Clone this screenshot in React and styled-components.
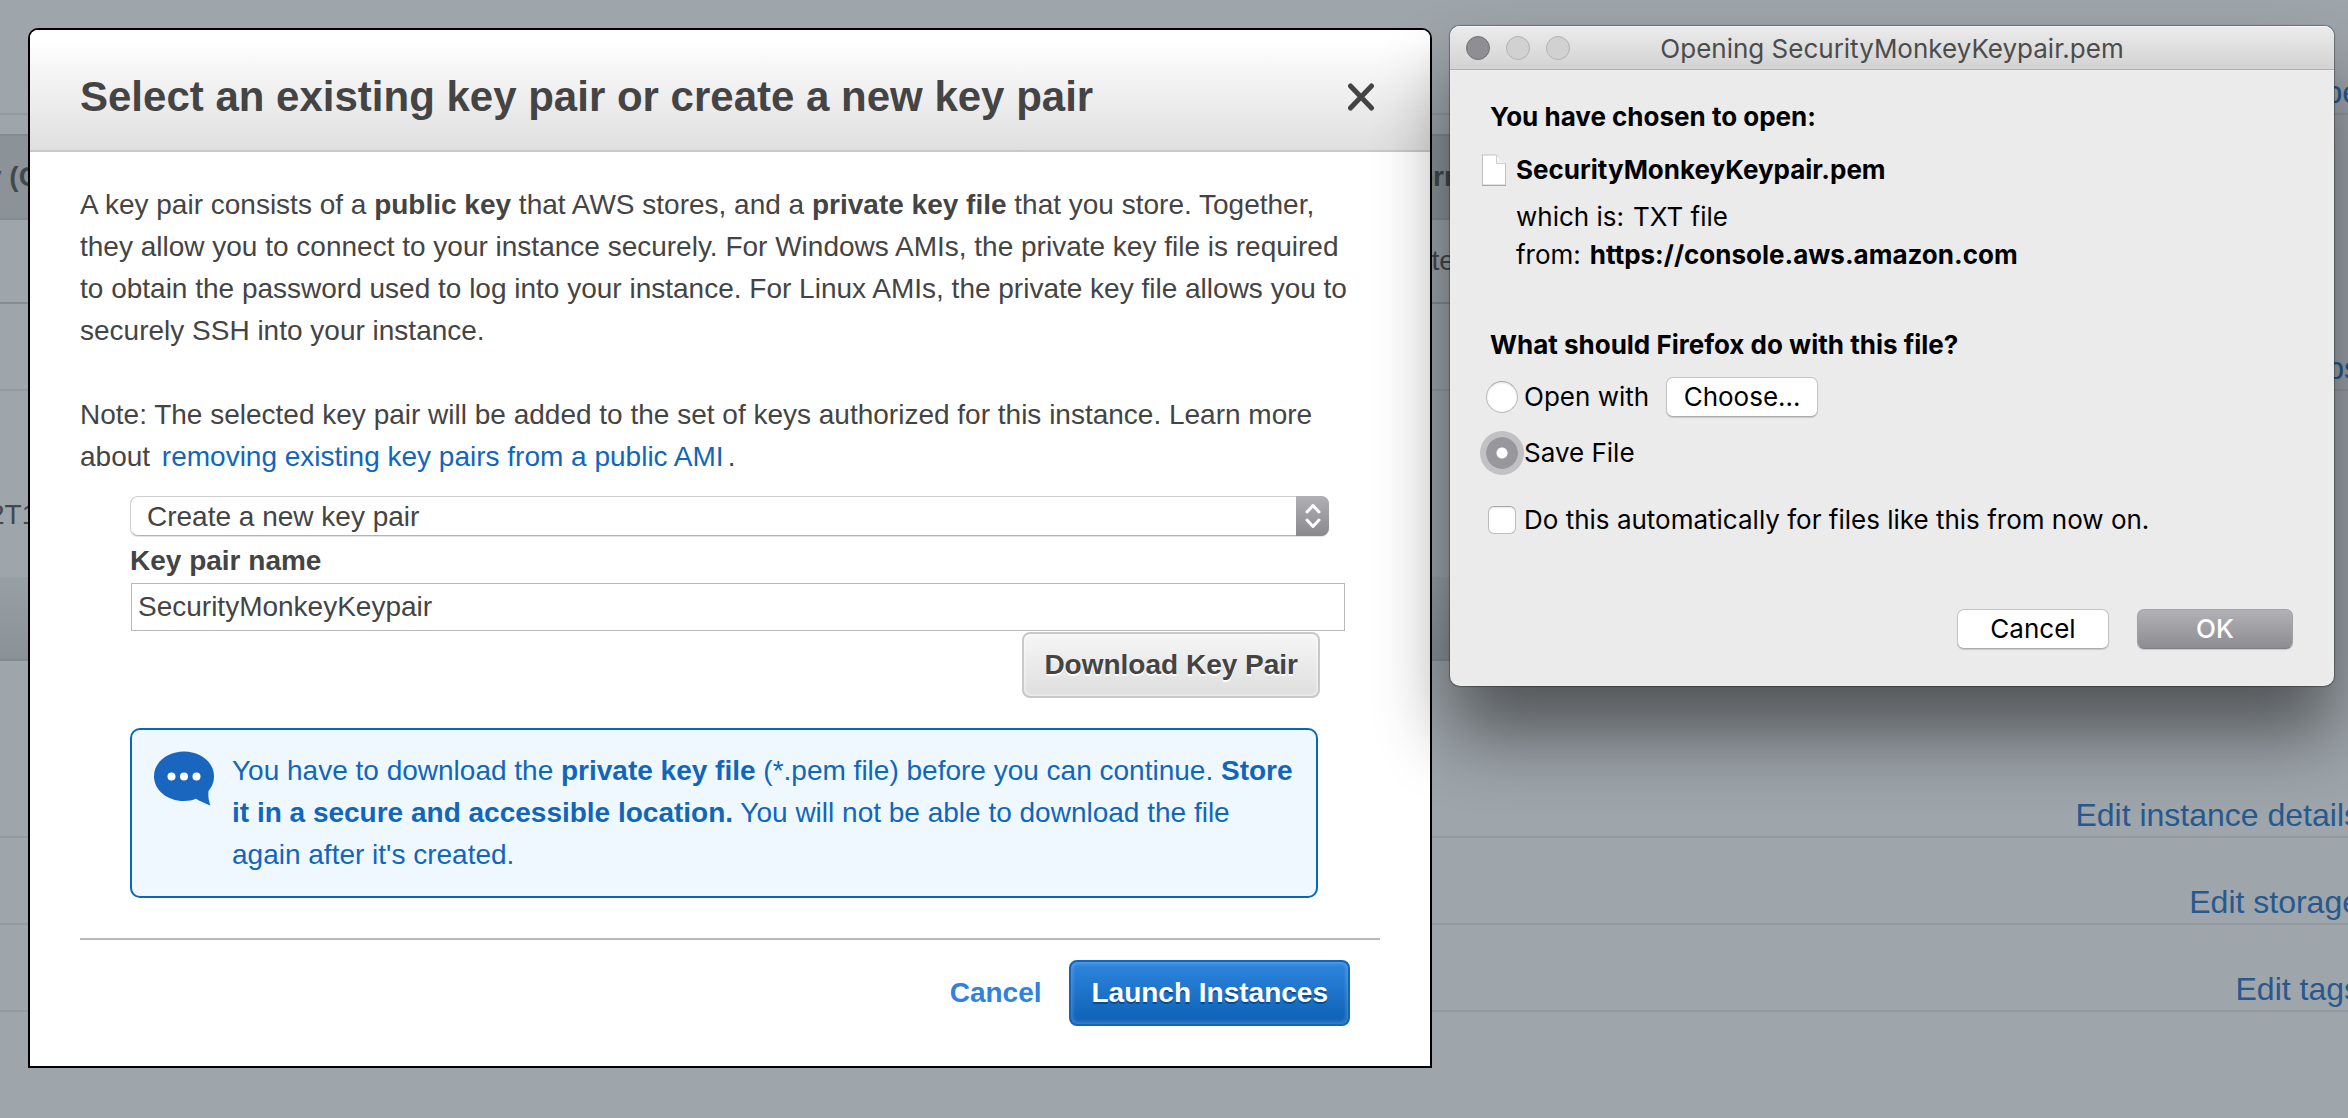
import React from 'react';
import styled, { createGlobalStyle, css } from 'styled-components';

const helvetica = '"Liberation Sans", Arial, sans-serif';
const system = 'Inter, Roboto, sans-serif';

const GlobalStyle = createGlobalStyle`
  * { box-sizing: border-box; }
  body { margin: 0; background: #9ea5ab; }
  h1, h2, p, dl, dd, hr { margin: 0; }
  button, input, select { margin: 0; font: inherit; }
`;

/* ---------- dimmed review page ---------- */

const Screen = styled.div`
  position: relative;
  min-height: 100vh;
  overflow: hidden;
  background: #9ea5ab;
  color: #42494e;
  font: 28px/32px ${helvetica};
`;

const Review = styled.main`
  margin-right: -12px;
`;

const SectionRow = styled.div`
  display: flex;
  align-items: flex-end;
  justify-content: flex-end;
  height: ${(p) => p.$height}px;
  padding-bottom: 3px;
  border-bottom: 2px solid #939a9f;
`;

const EditLink = styled.a`
  color: #27598e;
  font-size: 32px;
  line-height: 36px;
  text-decoration: none;
`;

const TypeTable = styled.table`
  width: calc(100% - 50px);
  margin-top: 19px;
  border-collapse: separate;
  border-spacing: 0;
  table-layout: fixed;

  th, td {
    height: 86px;
    padding: 0;
    overflow: hidden;
    text-align: left;
    white-space: nowrap;
    border-bottom: 2px solid #858c92;
  }
  th {
    background: #8c9398;
    border-top: 2px solid #848b90;
  }
  th:first-child { text-indent: -14px; }
  td { height: 84px; }
`;

const LeadCell = styled.col`
  width: 1416px;
`;

const IdRow = styled.div`
  display: flex;
  align-items: center;
  height: 186px;
  padding-top: 62px;
  text-indent: -11px;
`;

const Band = styled.div`
  height: 84px;
  margin-right: 50px;
  background: linear-gradient(#989fa5, #8a9197);
  border-bottom: 2px solid #848b90;
`;

/* ---------- windows above the page ---------- */

const Windows = styled.div`
  position: absolute;
  inset: 0;
  display: grid;
  grid-template-columns: minmax(0, 1fr) 884px;
  align-items: start;
  gap: 18px;
  padding: 26px 14px 0 28px;
`;

const Modal = styled.section`
  margin-top: 2px;
  overflow: hidden;
  background: #fff;
  border: 2px solid #000;
  border-radius: 10px 10px 0 0;
  color: #444;
  font: 28px/42px ${helvetica};
`;

const ModalHeader = styled.header`
  display: flex;
  align-items: center;
  justify-content: space-between;
  padding: 43px 56px 29px 50px;
  background: linear-gradient(#fff 8%, #dfdfdf);
  border-bottom: 2px solid #c8c8c8;
`;

const ModalTitle = styled.h1`
  font-size: 42px;
  line-height: 48px;
`;

const CloseButton = styled.button`
  display: flex;
  padding: 0;
  border: 0;
  background: none;
  color: #444;
`;

const ModalBody = styled.div`
  padding: 32px 50px 0;
`;

const Paragraph = styled.p`
  padding-right: 24px;
  & + & { margin-top: 42px; }
`;

const InlineLink = styled.a`
  padding: 0 4px;
  color: #1166bb;
  text-decoration: none;
`;

const Form = styled.form`
  display: flex;
  flex-direction: column;
  padding: 18px 35px 0 50px;
`;

const SelectBox = styled.div`
  position: relative;
  margin-right: 16px;
`;

const Select = styled.select`
  display: block;
  appearance: none;
  width: 100%;
  height: 40px;
  padding: 2px 50px 0 16px;
  border: 1px solid #cfcfcf;
  border-bottom-color: #b4b4b4;
  border-radius: 8px;
  background: #fff;
  color: #444;
  line-height: 36px;
  box-shadow: 0 1px 1px rgba(0, 0, 0, 0.12);
`;

const Stepper = styled.span`
  position: absolute;
  top: 0;
  right: 0;
  bottom: 0;
  display: flex;
  align-items: center;
  justify-content: center;
  width: 33px;
  border-radius: 0 8px 8px 0;
  background: linear-gradient(#b1b0b5, #89888d);
  pointer-events: none;
`;

const FieldLabel = styled.label`
  margin: 4px 0 1px;
  font-weight: bold;
`;

const TextField = styled.input`
  height: 48px;
  margin-left: 1px;
  padding: 0 6px;
  border: 1px solid #b8b8b8;
  border-radius: 0;
  background: #fff;
  color: #444;
  outline: none;
`;

const buttonTones = {
  grey: css`
    border-color: #c8c8c8;
    background: linear-gradient(#f6f6f6, #dedede);
    box-shadow: inset 0 0 3px 1px rgba(255, 255, 255, 0.6);
    color: #444;
    text-shadow: 0 2px 0 #fff;
  `,
  blue: css`
    border-color: #1166bb;
    background: linear-gradient(#2f86de, #1166bb 85%);
    box-shadow: inset 0 0 4px 1px rgba(255, 255, 255, 0.25);
    color: #fff;
    text-shadow: 0 2px 0 #0b4a8c;
  `,
};

const AwsButton = styled.button`
  height: 66px;
  padding: 0 20px;
  border: 2px solid;
  border-radius: 8px;
  font-weight: bold;
  ${(p) => buttonTones[p.$tone]}
`;

const DownloadRow = styled.div`
  display: flex;
  justify-content: flex-end;
  padding: 1px 25px 0 0;
`;

const Alert = styled.div`
  display: flex;
  align-items: flex-start;
  gap: 17px;
  margin: 30px 27px 0 0;
  padding: 20px 20px 20px 21px;
  border: 2px solid #0768bb;
  border-radius: 10px;
  background: #f0f8ff;
  color: #1166bb;

  svg { flex: none; }
`;

const ModalFooter = styled.footer`
  display: flex;
  align-items: center;
  justify-content: flex-end;
  gap: 28px;
  margin: 40px 50px 0;
  padding: 20px 30px 40px;
  border-top: 2px solid #b9b9b9;
`;

const CancelLink = styled.a`
  color: #2f82de;
  font-weight: bold;
  text-decoration: none;
`;

/* ---------- download dialog ---------- */

const Dialog = styled.section`
  position: relative;
  border-radius: 10px;
  background: #ebebeb;
  color: #000;
  font: 26px/32px ${system};
  box-shadow: 0 0 1px 1px rgba(0, 0, 0, 0.3), 0 48px 72px rgba(0, 0, 0, 0.48);
`;

const TitleBar = styled.header`
  display: grid;
  grid-template-columns: 1fr auto 1fr;
  align-items: center;
  height: 44px;
  padding: 0 16px;
  border-bottom: 1px solid #b1b1b1;
  border-radius: 10px 10px 0 0;
  background: linear-gradient(#ececec, #d2d2d2);
  box-shadow: inset 0 1px 0 #f6f6f6;
`;

const Lights = styled.div`
  display: flex;
  gap: 16px;
`;

const Light = styled.button`
  width: 24px;
  height: 24px;
  padding: 0;
  border: 1px solid ${(p) => (p.$active ? '#737277' : '#b3b3b3')};
  border-radius: 50%;
  background: ${(p) => (p.$active ? '#8f8e93' : '#d1d1d1')};
`;

const DialogTitle = styled.h2`
  padding-top: 2px;
  color: #4c4c4c;
  font-size: 26px;
  font-weight: 400;
`;

const DialogBody = styled.form`
  display: flex;
  flex-direction: column;
  padding: 31px 41px 37px 40px;
`;

const Question = styled.p`
  font-weight: 700;
`;

const FileRow = styled.div`
  display: flex;
  align-items: center;
  gap: 10px;
  margin: 21px 0 15px -8px;
  font-weight: 700;
`;

const Details = styled.dl`
  display: flex;
  flex-direction: column;
  gap: 6px;
  margin: 0 0 58px 26px;

  div { display: flex; gap: 9px; }
  div:last-child dd { font-weight: 700; }
`;

const OptionRow = styled.div`
  display: flex;
  align-items: center;
  gap: 17px;
  margin: ${(p) => p.$gap}px 0 0 -4px;
`;

const OptionLabel = styled.label`
  display: flex;
  align-items: center;
  gap: 6px;
`;

const Radio = styled.input`
  appearance: none;
  width: 32px;
  height: 32px;
  border: 1px solid #bdbdbd;
  border-top-color: #a6a6a6;
  border-radius: 50%;
  background: #fff;
  box-shadow: inset 0 1px 2px rgba(0, 0, 0, 0.12);

  &:checked {
    border: 0;
    background: radial-gradient(circle, #fff 5px, #98979c 6px);
    box-shadow: 0 0 0 6px #c1c1c3;
  }
`;

const Checkbox = styled.input`
  appearance: none;
  width: 28px;
  height: 28px;
  margin: 0 2px;
  border: 1px solid #bdbdbd;
  border-top-color: #a6a6a6;
  border-radius: 6px;
  background: #fff;
  box-shadow: inset 0 1px 2px rgba(0, 0, 0, 0.1);
`;

const PushButton = styled.button`
  width: ${(p) => (p.$primary ? 156 : 152)}px;
  height: 40px;
  padding: 0;
  border: 1px solid #c4c4c4;
  border-bottom-color: #adadad;
  border-radius: 7px;
  background: #fff;
  color: #000;
  box-shadow: 0 1px 1px rgba(0, 0, 0, 0.15);

  ${(p) =>
    p.$primary &&
    css`
      border-color: #a2a1a6;
      border-bottom-color: #7f7e83;
      background: linear-gradient(#b2b1b6, #8d8c91);
      color: #fff;
      font-weight: 500;
    `}
`;

const DialogActions = styled.div`
  display: flex;
  justify-content: flex-end;
  gap: 28px;
  margin-top: 73px;
`;

const CloseIcon = () => (
  <svg width="26" height="28" viewBox="0 0 26 28" aria-hidden="true">
    <path d="M2.5 3 23.5 25M23.5 3 2.5 25" stroke="currentColor" strokeWidth="5" strokeLinecap="round" />
  </svg>
);

const StepperIcon = () => (
  <svg width="18" height="26" viewBox="0 0 18 26" fill="none" stroke="#fff" strokeWidth="3" strokeLinecap="round" strokeLinejoin="round" aria-hidden="true">
    <path d="M3 9 9 2.5 15 9M3 17 9 23.5 15 17" />
  </svg>
);

const SpeechIcon = () => (
  <svg width="62" height="56" viewBox="0 0 62 56" aria-hidden="true">
    <path
      d="M31 1.5C47.8 1.5 61 12.4 61 26.2C61 32.5 58.8 36.8 55.5 41C55 46 55.6 51 57.5 55.5C52 53.5 47.5 51.5 43 48.8C39.5 50.2 35.500 51 31 51C14.200 51 1 40 1 26.200C1 12.4 14.2 1.5 31 1.5Z"
      fill="#1a66be"
    />
    <g fill="#fff">
      <circle cx="18.5" cy="26.5" r="4" />
      <circle cx="31" cy="26.5" r="4" />
      <circle cx="43.5" cy="26.5" r="4" />
    </g>
  </svg>
);

const FileIcon = () => (
  <svg width="24" height="32" viewBox="0 0 24 32" aria-hidden="true">
    <path d="M.5 1H14.5L23.5 10V31H.5Z" fill="#fff" stroke="#c2c2c2" />
    <path d="M14.5 1V9.5H23.5" fill="#f3f3f3" stroke="#cfcfcf" />
    <path d="M0 31.5H24" stroke="#a9a9a9" />
  </svg>
);

function ReviewPage() {
  return (
    <Review>
      <SectionRow $height={115}>
        <EditLink href="#type">Edit instance type</EditLink>
      </SectionRow>
      <TypeTable>
        <colgroup>
          <LeadCell />
          <col />
        </colgroup>
        <thead>
          <tr>
            <th>y (G</th>
            <th>orm</th>
          </tr>
        </thead>
        <tbody>
          <tr>
            <td />
            <td>&nbsp;&nbsp;te</td>
          </tr>
        </tbody>
      </TypeTable>
      <SectionRow $height={87}>
        <EditLink href="#groups">Edit security groups</EditLink>
      </SectionRow>
      <IdRow>2T1</IdRow>
      <Band />
      <SectionRow $height={177}>
        <EditLink href="#details">Edit instance details</EditLink>
      </SectionRow>
      <SectionRow $height={87}>
        <EditLink href="#storage">Edit storage</EditLink>
      </SectionRow>
      <SectionRow $height={87}>
        <EditLink href="#tags">Edit tags</EditLink>
      </SectionRow>
    </Review>
  );
}

function KeyPairModal() {
  return (
    <Modal role="dialog" aria-labelledby="modal-title">
      <ModalHeader>
        <ModalTitle id="modal-title">Select an existing key pair or create a new key pair</ModalTitle>
        <CloseButton type="button" aria-label="Close">
          <CloseIcon />
        </CloseButton>
      </ModalHeader>
      <ModalBody>
        <Paragraph>
          A key pair consists of a <b>public key</b> that AWS stores, and a <b>private key file</b> that you store.
          Together, they allow you to connect to your instance securely. For Windows AMIs, the private key file is
          required to obtain the password used to log into your instance. For Linux AMIs, the private key file allows
          you to securely SSH into your instance.
        </Paragraph>
        <Paragraph>
          Note: The selected key pair will be added to the set of keys authorized for this instance. Learn more about{' '}
          <InlineLink href="#ami">removing existing key pairs from a public AMI</InlineLink>.
        </Paragraph>
        <Form>
          <SelectBox>
            <Select aria-label="Key pair option" defaultValue="create">
              <option value="create">Create a new key pair</option>
            </Select>
            <Stepper>
              <StepperIcon />
            </Stepper>
          </SelectBox>
          <FieldLabel htmlFor="key-name">Key pair name</FieldLabel>
          <TextField id="key-name" type="text" defaultValue="SecurityMonkeyKeypair" />
          <DownloadRow>
            <AwsButton type="button" $tone="grey">Download Key Pair</AwsButton>
          </DownloadRow>
          <Alert>
            <SpeechIcon />
            <p>
              You have to download the <b>private key file</b> (*.pem file) before you can continue.{' '}
              <b>Store it in a secure and accessible location.</b> You will not be able to download the file again
              after it's created.
            </p>
          </Alert>
        </Form>
      </ModalBody>
      <ModalFooter>
        <CancelLink href="#cancel">Cancel</CancelLink>
        <AwsButton type="button" $tone="blue">Launch Instances</AwsButton>
      </ModalFooter>
    </Modal>
  );
}

function DownloadDialog() {
  return (
    <Dialog role="dialog" aria-labelledby="dialog-title">
      <TitleBar>
        <Lights>
          <Light type="button" aria-label="Close" $active />
          <Light type="button" aria-label="Minimize" />
          <Light type="button" aria-label="Zoom" />
        </Lights>
        <DialogTitle id="dialog-title">Opening SecurityMonkeyKeypair.pem</DialogTitle>
      </TitleBar>
      <DialogBody>
        <Question>You have chosen to open:</Question>
        <FileRow>
          <FileIcon />
          SecurityMonkeyKeypair.pem
        </FileRow>
        <Details>
          <div>
            <dt>which is:</dt>
            <dd>TXT file</dd>
          </div>
          <div>
            <dt>from:</dt>
            <dd>https://console.aws.amazon.com</dd>
          </div>
        </Details>
        <Question>What should Firefox do with this file?</Question>
        <OptionRow $gap={16}>
          <OptionLabel>
            <Radio type="radio" name="action" />
            Open with
          </OptionLabel>
          <PushButton type="button">Choose...</PushButton>
        </OptionRow>
        <OptionRow $gap={20}>
          <OptionLabel>
            <Radio type="radio" name="action" defaultChecked />
            Save File
          </OptionLabel>
        </OptionRow>
        <OptionRow $gap={35}>
          <OptionLabel>
            <Checkbox type="checkbox" />
            Do this automatically for files like this from now on.
          </OptionLabel>
        </OptionRow>
        <DialogActions>
          <PushButton type="button">Cancel</PushButton>
          <PushButton type="button" $primary>OK</PushButton>
        </DialogActions>
      </DialogBody>
    </Dialog>
  );
}

export default function App() {
  return (
    <Screen>
      <GlobalStyle />
      <ReviewPage />
      <Windows>
        <KeyPairModal />
        <DownloadDialog />
      </Windows>
    </Screen>
  );
}
